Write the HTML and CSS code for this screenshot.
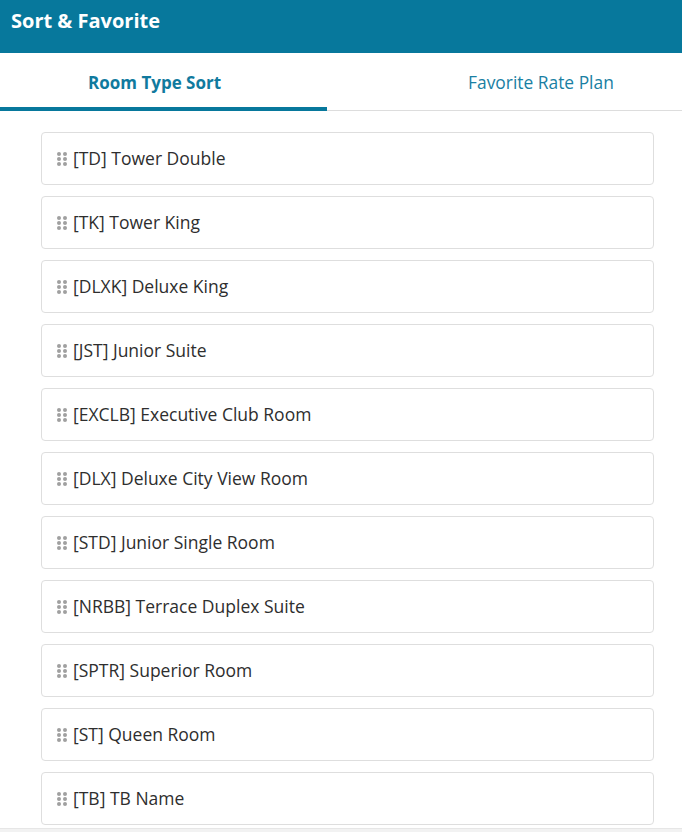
FILE: index.html
```html
<!DOCTYPE html>
<html lang="en">
<head>
<meta charset="utf-8">
<title>Sort &amp; Favorite</title>
<link rel="stylesheet" href="styles.css">
</head>
<body>
<div class="app">
  <header class="header">Sort &amp; Favorite</header>
  <nav class="tabs">
    <div class="tab tab-active">Room Type Sort</div>
    <div class="tab tab-second">Favorite Rate Plan</div>
  </nav>
  <ul class="list">
    <li class="item"><span class="handle"><i></i><i></i><i></i><i></i><i></i><i></i></span>[TD] Tower Double</li>
    <li class="item"><span class="handle"><i></i><i></i><i></i><i></i><i></i><i></i></span>[TK] Tower King</li>
    <li class="item"><span class="handle"><i></i><i></i><i></i><i></i><i></i><i></i></span>[DLXK] Deluxe King</li>
    <li class="item"><span class="handle"><i></i><i></i><i></i><i></i><i></i><i></i></span>[JST] Junior Suite</li>
    <li class="item"><span class="handle"><i></i><i></i><i></i><i></i><i></i><i></i></span>[EXCLB] Executive Club Room</li>
    <li class="item"><span class="handle"><i></i><i></i><i></i><i></i><i></i><i></i></span>[DLX] Deluxe City View Room</li>
    <li class="item"><span class="handle"><i></i><i></i><i></i><i></i><i></i><i></i></span>[STD] Junior Single Room</li>
    <li class="item"><span class="handle"><i></i><i></i><i></i><i></i><i></i><i></i></span>[NRBB] Terrace Duplex Suite</li>
    <li class="item"><span class="handle"><i></i><i></i><i></i><i></i><i></i><i></i></span>[SPTR] Superior Room</li>
    <li class="item"><span class="handle"><i></i><i></i><i></i><i></i><i></i><i></i></span>[ST] Queen Room</li>
    <li class="item"><span class="handle"><i></i><i></i><i></i><i></i><i></i><i></i></span>[TB] TB Name</li>
  </ul>
  <footer class="footer"></footer>
</div>
</body>
</html>
```
FILE: styles.css
```css
html, body {
  margin: 0;
  padding: 0;
  background: #ffffff;
}
body {
  font-family: "Open Sans", "Liberation Sans", sans-serif;
  color: #333333;
  overflow: hidden;
}
.app {
  width: 682px;
  height: 832px;
  display: flex;
  flex-direction: column;
}
.header {
  height: 53px;
  background: #07789c;
  color: #ffffff;
  font-weight: 700;
  font-size: 20px;
  line-height: 42px;
  padding-left: 11px;
  box-sizing: border-box;
}
.tabs {
  display: flex;
  height: 58px;
  border-bottom: 1px solid #dddddd;
  box-sizing: border-box;
}
.tab {
  font-size: 17.4px;
  color: #1a7fa3;
  line-height: 59px;
  box-sizing: border-box;
}
.tab-active {
  width: 327px;
  padding-left: 88px;
  font-weight: 700;
  font-size: 17px;
  color: #107a9e;
  border-bottom: 4px solid #07789c;
  height: 58px;
}
.tab-second {
  flex: 1;
  padding-left: 141px;
}
.list {
  list-style: none;
  margin: 0;
  padding: 21px 28px 0 41px;
  display: flex;
  flex-direction: column;
  gap: 11px;
}
.item {
  height: 53px;
  box-sizing: border-box;
  border: 1px solid #dedede;
  border-radius: 4px;
  display: flex;
  align-items: center;
  padding-left: 15px;
  padding-bottom: 2px;
  font-size: 17.5px;
  color: #2e2e2e;
}
.handle {
  display: grid;
  grid-template-columns: 4px 4px;
  grid-template-rows: 4px 4px 4px;
  column-gap: 2px;
  row-gap: 1px;
  margin-right: 6px;
  margin-top: 3px;
}
.handle i {
  display: block;
  width: 4px;
  height: 4px;
  border-radius: 50%;
  background: #a0a0a0;
}
.footer {
  margin-top: 3px;
  flex: 1;
  background: #f2f2f2;
  border-top: 1px solid #e6e6e6;
}
```
